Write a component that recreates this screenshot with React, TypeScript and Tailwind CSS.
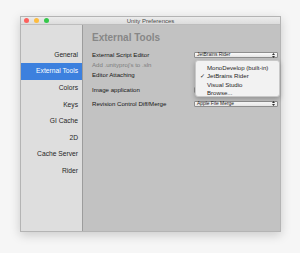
const sections = ['General', 'External Tools', 'Colors', 'Keys', 'GI Cache', '2D', 'Cache Server', 'Rider']

const editors = ['MonoDevelop (built-in)', 'JetBrains Rider', 'Visual Studio', 'Browse...']

function Arrows() {
    return (
        <svg width="3" height="5" viewBox="0 0 3 5" className="shrink-0">
            <path d="M1.5 0 L3 2 L0 2 Z" fill="#333" />
            <path d="M1.5 5 L3 3 L0 3 Z" fill="#333" />
        </svg>
    )
}

function Dropdown({ value }: { value: string }) {
    return (
        <div className="w-[84px] h-[6px] flex items-center justify-between pl-[2px] pr-[2px] border border-[#8e8e8e] rounded-[1px] bg-gradient-to-b from-[#fbfbfb] to-[#e4e4e4] text-[4.9px] leading-none text-[#222]">
            <span>{value}</span>
            <Arrows />
        </div>
    )
}

function Row({ label, dropdown, muted, className }: { label: string; dropdown?: string; muted?: boolean; className?: string }) {
    return (
        <div className={`flex items-center justify-between h-[10px] ${className ?? ''}`}>
            <span className={`text-[6.1px] ${muted ? 'text-[#7e7e7e]' : 'text-[#161616]'}`}>{label}</span>
            {dropdown !== undefined && <Dropdown value={dropdown} />}
        </div>
    )
}

export default function App() {
    return (
        <div className="w-[300px] h-[253px] bg-[#f6f6f6] pt-[16px] pl-[20px] font-['Liberation_Sans',Arial,sans-serif]">
            <div className="relative w-[261px] h-[216px] flex flex-col border border-[#b4b4b4] shadow-[0_3px_10px_rgba(0,0,0,0.18)]">
                {/* title bar */}
                <div className="relative h-[8px] flex items-center bg-gradient-to-b from-[#ececec] to-[#dcdcdc] border-b border-[#bdbdbd]">
                    <div className="flex gap-[5px] pl-[3px]">
                        <div className="w-[5px] h-[5px] rounded-full bg-[#fc605c]" />
                        <div className="w-[5px] h-[5px] rounded-full bg-[#fdbc40]" />
                        <div className="w-[5px] h-[5px] rounded-full bg-[#34c84a]" />
                    </div>
                    <span className="absolute left-0 right-0 text-center text-[6px] leading-none text-[#4a4a4a]">Unity Preferences</span>
                </div>

                <div className="flex flex-1">
                    {/* sidebar */}
                    <div className="w-[62px] bg-[#dedede] border-r border-[#9c9c9c] pt-[21.5px] flex flex-col">
                        {sections.map((s, i) => (
                            <div
                                key={s}
                                className={`h-[16.6px] flex items-center justify-end pr-[4px] text-[6.7px] ${i === 1 ? 'bg-[#3c80de] text-white' : 'text-[#262626]'}`}
                            >
                                {s}
                            </div>
                        ))}
                    </div>

                    {/* content */}
                    <div className="flex-1 bg-[#c2c2c2] pl-[9px] pr-[2px] pt-[6px] flex flex-col">
                        <div className="h-[13px] flex items-center text-[10px] font-bold text-[#878787]">External Tools</div>
                        <Row label="External Script Editor" dropdown="JetBrains Rider" className="mt-[6px]" />
                        <Row label="Add .unityproj's to .sln" muted />
                        <Row label="Editor Attaching" />
                        <Row label="Image application" dropdown="" className="mt-[4.7px]" />
                        <Row label="Revision Control Diff/Merge" dropdown="Apple File Merge" className="mt-[4.3px]" />
                    </div>
                </div>

                {/* popup */}
                <div className="absolute left-[174px] top-[43px] w-[85px] h-[37px] rounded-[3px] bg-[#f2f2f2] border border-[#c8c8c8] shadow-[0_2px_5px_rgba(0,0,0,0.25)] pt-[2px]">
                    {editors.map((e, i) => (
                        <div key={e} className="relative h-[8.5px] flex items-center pl-[11px] text-[6.1px] text-[#1e1e1e]">
                            {i === 1 && <span className="absolute left-[4px] text-[5.5px]">✓</span>}
                            {e}
                        </div>
                    ))}
                </div>
            </div>
        </div>
    )
}
